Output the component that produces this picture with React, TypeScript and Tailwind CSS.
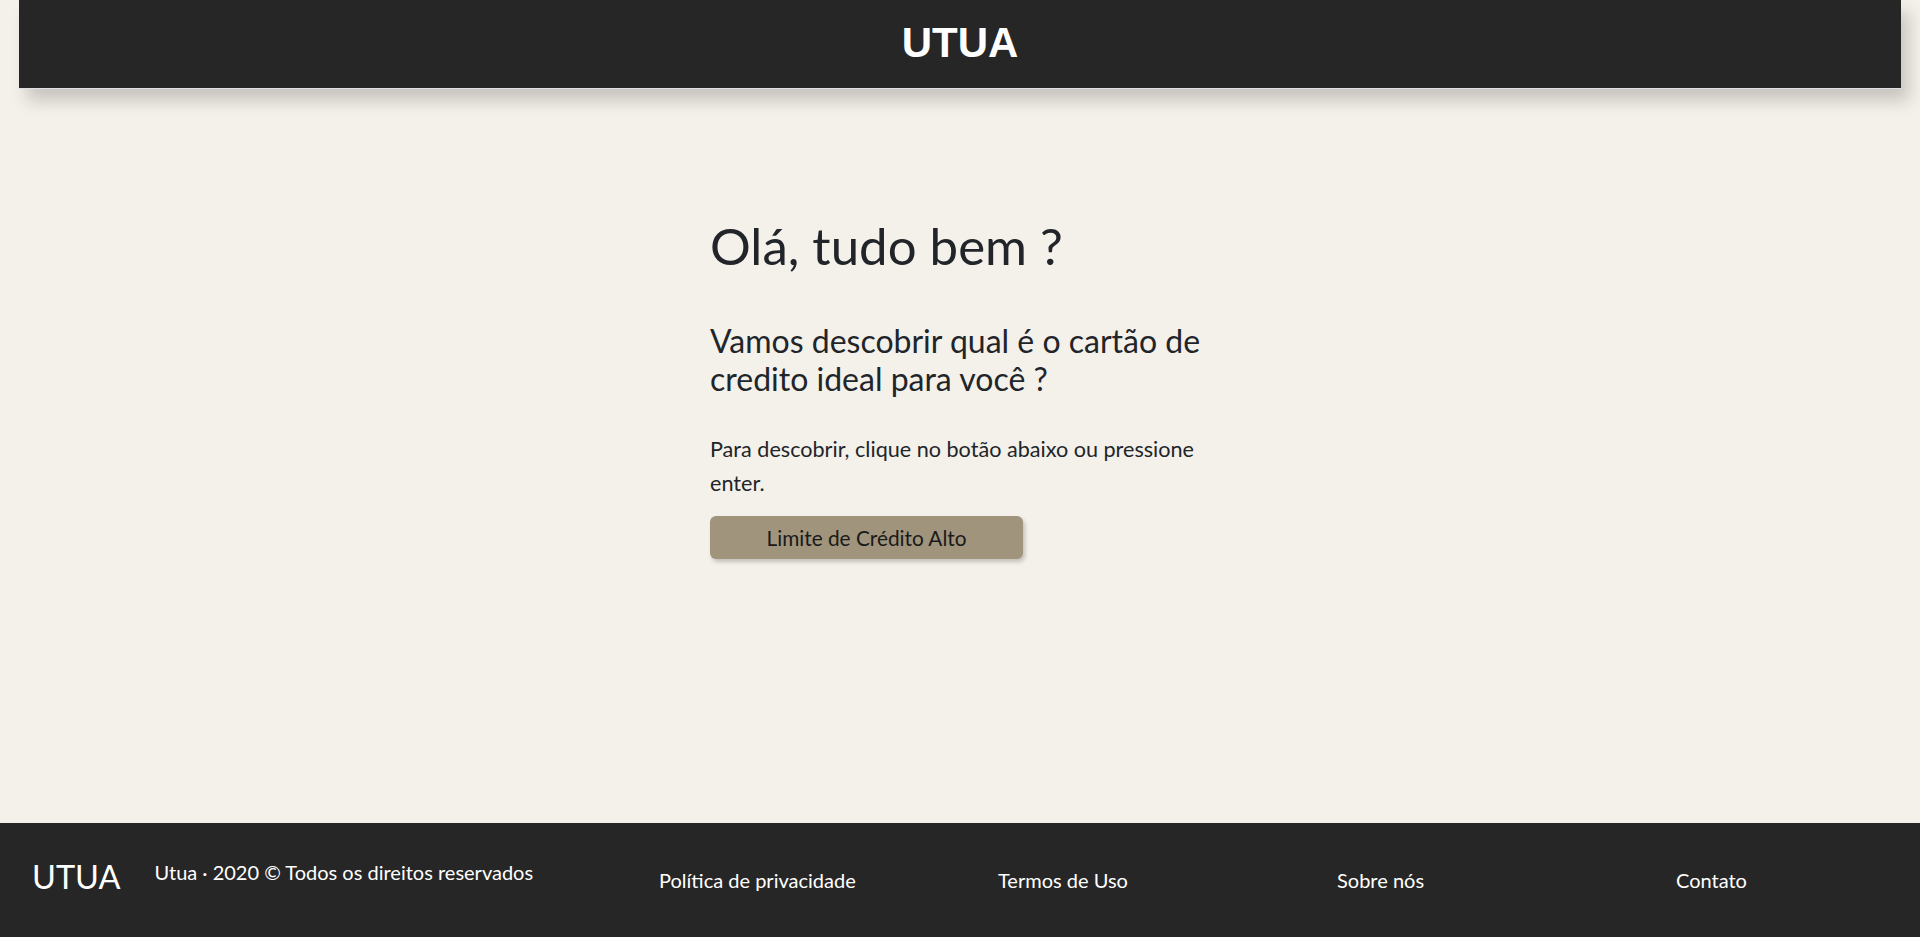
export default function App() {
  return (
    <div className="h-[937px] flex flex-col bg-[#f4f0ea] font-['Lato',sans-serif] overflow-hidden">
      <header className="relative z-10 mx-[19px] h-[89px] shrink-0 bg-[#262626] border-b border-[#dde1e6] flex items-center justify-center shadow-[8px_12px_16px_rgba(0,0,0,0.18)]">
        <span className="-mt-[3px] text-white text-[42px] font-bold leading-none font-['Liberation_Sans',Arial,sans-serif]">UTUA</span>
      </header>
      <main className="flex-1 flex justify-center pt-[126px]">
        <div className="w-[500px] text-[#212529]">
          <h1 className="text-[51px] leading-[1.2]">Olá, tudo bem ?</h1>
          <h2 className="mt-[46px] text-[32px] leading-[1.17]">
            Vamos descobrir qual é o cartão de
            <br />
            credito ideal para você ?
          </h2>
          <p className="mt-[36px] text-[21.6px] leading-[1.55]">
            Para descobrir, clique no botão abaixo ou pressione
            <br />
            enter.
          </p>
          <button className="mt-[16px] w-[313px] h-[43px] rounded-[6px] bg-[#a0947c] text-[20.8px] text-[#1a1a1a] shadow-[2px_3px_4px_rgba(0,0,0,0.2)]">
            Limite de Crédito Alto
          </button>
        </div>
      </main>
      <footer className="h-[114px] shrink-0 bg-[#262626] text-white flex items-center pl-[32px]">
        <div className="w-[627px] flex items-start gap-[34px] -mt-[6px]">
          <span className="text-[32.5px] leading-none">UTUA</span>
          <span className="mt-[1px] text-[20px] leading-none">Utua · 2020 © Todos os direitos reservados</span>
        </div>
        <div className="flex-1 grid grid-cols-[339px_339px_339px_1fr] text-[20px] leading-none">
          <span>Política de privacidade</span>
          <span>Termos de Uso</span>
          <span>Sobre nós</span>
          <span>Contato</span>
        </div>
      </footer>
    </div>
  );
}
